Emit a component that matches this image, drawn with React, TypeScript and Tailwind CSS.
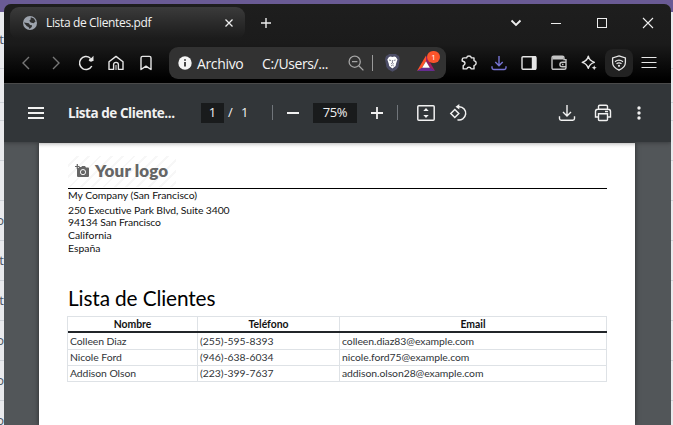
import React from "react";

type IconProps = { children: React.ReactNode; w?: number; h?: number; className?: string };

const Icon = ({ children, w = 18, h = 18, className = "" }: IconProps) => (
  <svg
    width={w}
    height={h}
    viewBox={`0 0 ${w} ${h}`}
    fill="none"
    stroke="currentColor"
    strokeWidth="1.4"
    className={`shrink-0 ${className}`}
  >
    {children}
  </svg>
);

const Cell = ({ children }: { children: React.ReactNode }) => (
  <div className="flex h-8 w-[30px] shrink-0 items-center justify-center">{children}</div>
);

const backdropRows = [
  { h: 57, t: "t" },
  { h: 34, t: "" },
  { h: 18, t: "" },
  { h: 40, t: "" },
  { h: 40, t: "" },
  { h: 40, t: "o" },
  { h: 40, t: "t" },
  { h: 40, t: "t" },
  { h: 40, t: "o" },
  { h: 40, t: "o" },
  { h: 40, t: "o" },
];

const Backdrop = ({ side }: { side: "left" | "right" }) => (
  <div className={`flex h-full shrink-0 flex-col overflow-hidden bg-[#e9eaed] ${side === "left" ? "w-1" : "w-0.5"}`}>
    <div className="h-3 shrink-0 bg-[#6a5b95]" />
    {backdropRows.map((r, i) => (
      <div
        key={i}
        style={{ height: r.h }}
        className="flex shrink-0 items-center justify-end border-b border-[#ced2d8] font-['Open_Sans',sans-serif] text-[13px] text-[#4b5563] first-of-type:border-0"
      >
        {side === "left" ? r.t : ""}
      </div>
    ))}
  </div>
);

const TitleBar = () => (
  <div className="flex h-[39px] shrink-0 pt-[3px]">
    <div className="ml-1.5 flex h-8 w-[235px] shrink-0 items-center rounded-[9px] bg-linear-to-b from-[#3b3b3b] to-[#1b1b1b] pl-3">
      <Icon w={16} h={16} className="text-[#9da3ad]">
        <circle cx="8" cy="8" r="7" fill="currentColor" stroke="none" />
        <path d="M8.8 2.2 12 3.4 13.6 6.6 11.5 8.2 8.7 7.5 7.3 5.8 8.6 4.6ZM1.8 7.5 6.8 8.2 8 10 10 10.3 9.8 12 7.6 13.9 6.5 12 4.8 11.2Z" fill="#303030" stroke="none" />
      </Icon>
      <span className="ml-2 w-[170px] whitespace-nowrap font-['Open_Sans',sans-serif] text-[12px] tracking-[-0.35px] text-[#f2f2f2]">
        Lista de Clientes.pdf
      </span>
      <Icon w={10} h={10} className="ml-2 text-[#eeeeee]">
        <path d="m1.5 1.5 7 7m0-7-7 7" strokeWidth="1.3" />
      </Icon>
    </div>
    <div className="flex h-8 flex-1 items-center text-[#ededed]">
      <Icon w={12} h={12} className="ml-[15px]">
        <path d="M6 1v10M1 6h10" />
      </Icon>
      <Icon w={12} h={12} className="ml-[238px]">
        <path d="m1.5 3.5 4.5 4.5 4.5-4.5" strokeWidth="1.9" />
      </Icon>
      <Icon w={12} h={12} className="ml-7">
        <path d="M1 6.5h10" strokeWidth="1" />
      </Icon>
      <Icon w={12} h={12} className="ml-[34px]">
        <rect x="1.5" y="1.5" width="9" height="9" strokeWidth="1" />
      </Icon>
      <Icon w={12} h={12} className="ml-[34px]">
        <path d="m1 1 10 10M11 1 1 11" strokeWidth="1.1" />
      </Icon>
    </div>
  </div>
);

const AddressBar = () => (
  <div className="ml-2 flex h-8 w-[277px] shrink-0 items-center rounded-[9px] bg-[#323232] font-['Open_Sans',sans-serif] text-[14px] text-[#f5f5f5]">
    <Icon w={14} h={14} className="ml-[9px]">
      <circle cx="7" cy="7" r="6.7" fill="#f5f5f5" stroke="none" />
      <path d="M7 6v4.6M7 3.2v1.6" stroke="#323232" strokeWidth="1.8" />
    </Icon>
    <span className="ml-[5px] w-[65px] whitespace-nowrap tracking-[-0.35px]">Archivo</span>
    <span className="w-[86px] whitespace-nowrap tracking-[-0.4px]">C:/Users/...</span>
    <Icon w={16} h={16} className="text-[#a5a5a5]">
      <circle cx="6.7" cy="6.7" r="5.6" strokeWidth="1.3" />
      <path d="m10.8 10.8 4.6 4.6M4 6.7h5.4" strokeWidth="1.3" />
    </Icon>
    <div className="ml-2 h-4 w-px bg-[#9a9a9a]" />
    <Icon w={17} h={18} className="ml-[11px]">
      <path d="m4 1 1-1h7l1 1 2 1 .7 3-1.3 8-2 2.5-4 2.2-4-2.2-2-2.5L1 5l1-3Z" fill="#4c4d66" stroke="none" />
      <path d="m5 3 1.5-.6L8.4 3l1.9-.6 1.5.6 1.7 2.4-1.4 4.2-.5 2.3-3.2 2.5-3.2-2.5-.5-2.3-1.4-4.2Z" fill="#fff" stroke="none" />
      <path d="m5 6 2 .5M11.7 6l-2 .5M8.4 6v2.8l-1.5 1.3M8.4 8.8l1.5 1.3M7 12l1.4-1 1.4 1" stroke="#4c4d66" strokeWidth=".7" />
    </Icon>
    <div className="relative ml-[15px] h-[18px] w-[22px]">
      <Icon w={20} h={18}>
        <path d="M10 1.5 10 7 5.8 14.2 1 17Z" fill="#ff5429" stroke="none" />
        <path d="M10 1.5 19 17 14.2 14.2 10 7Z" fill="#9e1f63" stroke="none" />
        <path d="M1 17 5.8 13.7h8.4L19 17Z" fill="#662d91" stroke="none" />
        <path d="m10 7.3-3.9 6.4h7.8Z" fill="#fff" stroke="none" />
      </Icon>
      <span className="absolute -top-[3px] left-[11px] flex h-3 w-[13px] items-center justify-center rounded-full bg-[#fb542b] text-[8px] leading-none text-white">
        1
      </span>
    </div>
  </div>
);

const NavBar = () => (
  <div className="flex h-10 shrink-0 items-center pl-[7px] text-[#e6e6e6]">
    <Cell>
      <Icon w={16} h={16} className="text-[#777777]"><path d="m11 2-6 6 6 6" /></Icon>
    </Cell>
    <Cell>
      <Icon w={16} h={16} className="text-[#777777]"><path d="m5 2 6 6-6 6" /></Icon>
    </Cell>
    <Cell>
      <Icon w={16} h={16}>
        <path d="M12.2 3A6.5 6.5 0 1 0 13.8 11" strokeWidth="1.5" />
        <path d="M10.5 6h5V.8Z" fill="currentColor" stroke="none" />
        <circle cx="13" cy="4.8" r="1.9" fill="currentColor" stroke="none" />
      </Icon>
    </Cell>
    <Cell>
      <Icon w={16} h={16}><path d="m1 6.7 7-5.3 7 5.3v7.7h-4.6V9.6q0-2.2-2.4-2.2T5.6 9.6v4.8H1Z" strokeLinejoin="round" /><path d="M8 10v5" strokeWidth="1" /></Icon>
    </Cell>
    <Cell>
      <Icon w={16} h={16}><path d="M3 3q0-1.6 1.6-1.6h6.8Q13 1.4 13 3v11.5l-5-3.4-5 3.4Z" strokeLinejoin="round" /></Icon>
    </Cell>
    <AddressBar />
    <div className="ml-2 flex items-center">
      <Cell>
        <Icon w={16} h={16}>
          <path d="M3 2.9h2.6Q6 1 8 1t2.4 1.9H13v2.7q2.2.5 2.2 2.5T13 10.6v3.3h-2.7Q9.7 12.3 8 12.3t-2.3 1.6H2.2v-3.2q1.8-.7 1.8-2.4T1.2 6V4.5Q1.2 2.9 3 2.9Z" strokeLinejoin="round" />
        </Icon>
      </Cell>
      <Cell>
        <Icon w={16} h={16} className="text-[#7774d4]"><path d="M8 1v9.5M4.3 7 8 10.7 11.7 7M1 11.2v1.6q0 1.7 1.7 1.7h10.6q1.7 0 1.7-1.7v-1.6" /></Icon>
      </Cell>
      <Cell>
        <Icon w={16} h={16}><rect x="1" y="1.7" width="14" height="12.6" rx="1" /><path d="M10.8 1.3H15v13.4h-4.2Z" fill="currentColor" stroke="none" /></Icon>
      </Cell>
      <Cell>
        <Icon w={16} h={16} className="text-[#c5c5c5]">
          <path d="M1 2.8q0-1.6 1.6-1.6h8.8q1.6 0 1.6 1.6v1.8h2v8.2q0 1.5-1.6 1.5H2.5Q1 14.3 1 12.8Z" />
          <path d="M1.5 2h11v2.5h-11Z" fill="currentColor" stroke="none" />
          <path d="M15 7.2h-3.8a2.3 2.3 0 0 0 0 4.6H15M11 9.5h1.5" />
        </Icon>
      </Cell>
      <Cell>
        <Icon w={16} h={16}>
          <path d="M7.3 1.2Q8.4 5.8 13.4 7.3 8.4 8.7 7.3 13.4 6.1 8.7 1.2 7.3 6.1 5.8 7.3 1.2Z" strokeLinejoin="round" />
          <path d="m13.2 10.3.7 1.8 1.8.7-1.8.7-.7 1.8-.7-1.8-1.8-.7 1.8-.7Z" fill="currentColor" stroke="none" />
        </Icon>
      </Cell>
      <div className="mx-px flex size-7 items-center justify-center rounded-lg bg-[#222222]">
        <Icon w={16} h={16}>
          <path d="M8 .9 14.4 3v4.5q0 4.8-6.4 7.7-6.4-2.9-6.4-7.7V3Z" strokeWidth="1.3" />
          <path d="M4 6.7q4-3 8 0M5.5 8.8q2.5-1.9 5 0" strokeWidth="1.2" />
          <circle cx="8" cy="10.8" r="1.1" fill="currentColor" stroke="none" />
        </Icon>
      </div>
      <Cell>
        <Icon w={16} h={16}><path d="M.5 2.5h15M.5 7.5h15M.5 12.5h15" strokeWidth="1.2" /></Icon>
      </Cell>
    </div>
  </div>
);

const PdfToolbar = () => (
  <div className="z-10 flex h-[58px] shrink-0 items-center bg-[#323639] pb-px pl-6 font-['Open_Sans',sans-serif] text-[13px] text-[#f1f1f1] shadow-[0_1px_4px_rgba(0,0,0,0.3)]">
    <Icon w={16} h={14}><path d="M0 2h16M0 7h16M0 12h16" strokeWidth="2" /></Icon>
    <span className="ml-6 w-[133px] whitespace-nowrap pt-px text-[13.5px] font-bold tracking-[-0.45px]">Lista de Cliente...</span>
    <span className="flex h-5 w-[23px] items-center justify-center bg-[#191b1c]">1</span>
    <span className="ml-1 w-[13px]">/</span>
    <span className="w-[31px]">1</span>
    <div className="h-[15px] w-px bg-[#70757a]" />
    <Icon w={12} h={12} className="ml-[14px]"><path d="M0 6h12" strokeWidth="2" /></Icon>
    <span className="ml-[14px] flex h-5 w-11 items-center justify-center bg-[#191b1c] tracking-[-0.4px]">75%</span>
    <Icon w={12} h={12} className="ml-[14px]"><path d="M0 6h12M6 0v12" strokeWidth="1.8" /></Icon>
    <div className="ml-[14px] h-[15px] w-px bg-[#70757a]" />
    <Icon w={18} h={16} className="ml-[19px]">
      <rect x=".8" y=".8" width="16.4" height="14.4" rx="1" strokeWidth="1.5" />
      <path d="m9 3 2.7 3H6.3Zm0 10 2.7-3H6.3Z" fill="currentColor" stroke="none" />
    </Icon>
    <Icon w={18} h={18} className="ml-[14px]">
      <path d="m5.8 5.5 4 4-4 4-4-4Z" strokeWidth="1.5" />
      <path d="M8.5 2.7h1.8a6.6 6.6 0 1 1-1.8 13" strokeWidth="1.5" />
      <path d="M10.3 0v5.5L6.5 2.7Z" fill="currentColor" stroke="none" />
    </Icon>
    <Icon w={18} h={18} className="ml-[91px]"><path d="M9 1v11M5 8l4 4 4-4M1.5 12.2v2.3q0 1.7 1.7 1.7h11.6q1.7 0 1.7-1.7v-2.3" /></Icon>
    <Icon w={18} h={18} className="ml-[18px]">
      <path d="M4.5 5V2.5q0-1.3 1.3-1.3h6.4q1.3 0 1.3 1.3V5M4 13H1.5V7.5q0-2.3 2.3-2.3h10.4q2.3 0 2.3 2.3V13H14M4.5 9.7h9v5.8q0 1-1 1h-7q-1 0-1-1Z" />
      <path d="M11 7.5h3" />
    </Icon>
    <Icon w={4} h={16} className="ml-[25px]">
      <g fill="currentColor" stroke="none"><circle cx="2" cy="3" r="1.7" /><circle cx="2" cy="8" r="1.7" /><circle cx="2" cy="13" r="1.7" /></g>
    </Icon>
  </div>
);

const clients = [
  ["Colleen Diaz", "(255)-595-8393", "colleen.diaz83@example.com"],
  ["Nicole Ford", "(946)-638-6034", "nicole.ford75@example.com"],
  ["Addison Olson", "(223)-399-7637", "addison.olson28@example.com"],
];

const ClientTable = () => (
  <div className="-ml-px mt-1 w-[540px] border-l border-t border-[#dee2e6] text-[10.4px]">
    <div className="grid h-4 grid-cols-[130px_142px_267px] border-b-2 border-[#212529] text-center font-bold leading-[14px]">
      <div className="border-r border-[#dee2e6]">Nombre</div>
      <div className="border-r border-[#dee2e6]">Teléfono</div>
      <div className="border-r border-[#dee2e6]">Email</div>
    </div>
    {clients.map(([name, phone, email]) => (
      <div key={name} className="grid h-4 grid-cols-[130px_142px_267px] leading-[16px] tracking-[-0.06px] text-[#303438] last:h-[17px] *:whitespace-nowrap *:border-b *:border-r *:border-[#dee2e6] *:pl-0.5">
        <div>{name}</div>
        <div className="tracking-normal">{phone}</div>
        <div>{email}</div>
      </div>
    ))}
  </div>
);

const Logo = () => (
  <div className="flex h-[31px] w-[108px] items-center bg-[repeating-linear-gradient(135deg,#ffffff_0px,#ffffff_6px,#f7f7f7_6px,#f7f7f7_8px)] pb-0.5 pl-[7px] text-[#666666]">
    <Icon w={15} h={14}>
      <path d="M2 4h1.8V3h2.5L7 2h3l1 1.5h2q1 0 1 1V12q0 1-1 1H3q-1 0-1-1Z" fill="currentColor" stroke="none" />
      <circle cx="8" cy="8.1" r="2.6" stroke="#f8f8f8" strokeWidth="1" />
      <path d="M2.3 0v5M0 2.5h4.6" strokeWidth="1.2" />
    </Icon>
    <span className="ml-[5px] whitespace-nowrap text-[17px] font-extrabold leading-5 tracking-[0.14px]">Your logo</span>
  </div>
);

const Page = () => (
  <div className="flex w-[596px] shrink-0 flex-col bg-white bg-[linear-gradient(#eeeeee,#ffffff_5px)] pl-[29px] pt-[13px] font-[Lato,sans-serif] text-[10.4px] text-[#111111] shadow-[0_0_5px_rgba(0,0,0,0.5)]">
    <Logo />
    <div className="mt-px h-px w-[539px] bg-black" />
    <div className="flex flex-col whitespace-nowrap leading-[13px]">
      <span className="tracking-[-0.05px]">My Company (San Francisco)</span>
      <span className="mt-0.5 tracking-[-0.11px]">250 Executive Park Blvd, Suite 3400</span>
      <span className="-mt-px tracking-[-0.1px]">94134 San Francisco</span>
      <span>California</span>
      <span>España</span>
    </div>
    <h1 className="mt-[29px] h-7 whitespace-nowrap text-[20.8px] leading-[27px] tracking-[-0.12px] text-black">Lista de Clientes</h1>
    <ClientTable />
  </div>
);

export default function App() {
  return (
    <div className="flex h-[425px] w-[673px] overflow-hidden bg-[#6a5b95]">
      <Backdrop side="left" />
      <div className="flex w-[667px] shrink-0 flex-col pt-1">
        <div className="flex flex-1 flex-col overflow-hidden rounded-t-[7px] bg-[#525659]">
          <div className="flex shrink-0 flex-col bg-[linear-gradient(#1e1e1e,#1b1b1b_40px,#000_75px)]">
            <TitleBar />
            <NavBar />
          </div>
          <div className="h-px shrink-0 bg-[#505050]" />
          <PdfToolbar />
          <div className="flex flex-1 justify-start pl-[35px] pt-px">
            <Page />
          </div>
        </div>
      </div>
      <Backdrop side="right" />
    </div>
  );
}
